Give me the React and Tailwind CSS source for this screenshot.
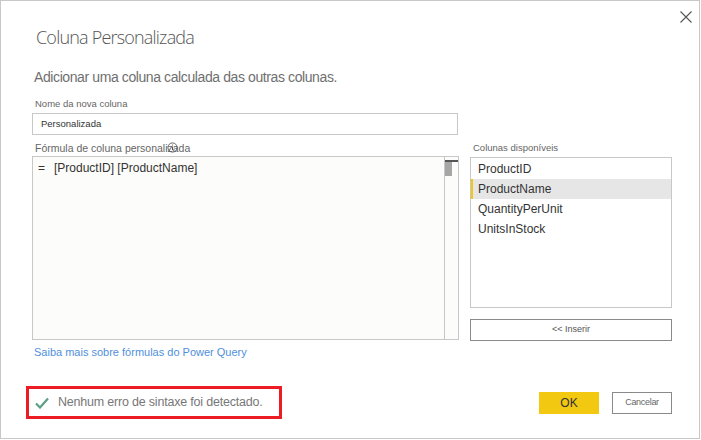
import React from 'react';

const columns = ['ProductID', 'ProductName', 'QuantityPerUnit', 'UnitsInStock'];

const App = () => {
  return (
    <div className="w-[701px] h-[440px] bg-white font-['Liberation_Sans',Arial,sans-serif]">
      <div className="relative w-[700px] h-[439px] border border-[#c8c8c8] pl-[31px]">
        {/* Close */}
        <button className="absolute right-[6px] top-[9px] w-[14px] h-[14px]">
          <svg width="14" height="14" viewBox="0 0 14 14">
            <path d="M1.5 1.5 L12.5 12.5 M12.5 1.5 L1.5 12.5" stroke="#555" strokeWidth="1.1" />
          </svg>
        </button>

        {/* Header */}
        <h1 className="pt-[25px] pl-[4px] text-[18px] leading-[22px] font-light tracking-[-0.8px] text-[#555] font-['Open_Sans',sans-serif]">
          Coluna Personalizada
        </h1>
        <p className="mt-[20px] pl-[2px] text-[14px] leading-[18px] text-[#6f6f6f] tracking-[-0.4px]">
          Adicionar uma coluna calculada das outras colunas.
        </p>

        {/* Nome da nova coluna */}
        <label className="block mt-[12px] pl-[3px] text-[9.5px] leading-[12px] text-[#666]">
          Nome da nova coluna
        </label>
        <div className="mt-[3px] w-[426px] h-[22px] border border-[#c8c8c8] pl-[8px] flex items-center text-[9.5px] text-[#333]">
          Personalizada
        </div>

        {/* Formula + available columns */}
        <div className="mt-[7px] flex gap-[11px]">
          <div className="w-[427px]">
            <div className="relative pl-[3px] h-[14px] text-[10.5px] leading-[12px] text-[#666]">
              Fórmula de coluna personalizada
              <svg className="absolute left-[135px] top-[0px]" width="11" height="11" viewBox="0 0 11 11">
                <circle cx="5.5" cy="5.5" r="4.6" fill="none" stroke="#555" strokeWidth="0.9" />
                <path d="M5.5 4.6 V8.2 M5.5 2.6 V3.5" stroke="#555" strokeWidth="1" />
              </svg>
            </div>
            <div className="flex h-[184px] border border-[#c8c8c8] bg-[#fcfcfa]">
              <div className="flex-1 pl-[5px] pt-[4px] text-[12px] leading-[14px] text-[#333]">
                <span className="mr-[9px]">=</span>[ProductID] [ProductName]
              </div>
              <div className="w-[14px] border-l border-[#c8c8c8] pt-[3px]">
                <div className="h-[2px] bg-[#555]" />
                <div className="w-[7px] h-[14px] bg-[#a6a6a6]" />
              </div>
            </div>
            <a className="block mt-[6px] pl-[2px] text-[11px] leading-[13px] text-[#4f8fdc]">
              Saiba mais sobre fórmulas do Power Query
            </a>
          </div>

          <div className="w-[202px]">
            <div className="pl-[3px] h-[15px] text-[9.5px] leading-[12px] text-[#666]">
              Colunas disponíveis
            </div>
            <ul className="h-[151px] border border-[#c8c8c8] pt-[1px]">
              {columns.map((c) => (
                <li
                  key={c}
                  className={
                    c === 'ProductName'
                      ? 'h-[20px] flex items-center pl-[5px] text-[12px] text-[#333] bg-[#e6e6e6] border-l-2 border-[#f2c811]'
                      : 'h-[20px] flex items-center pl-[7px] text-[12px] text-[#333]'
                  }
                >
                  {c}
                </li>
              ))}
            </ul>
            <button className="mt-[11px] w-[202px] h-[22px] border border-[#8a8a8a] text-[9px] text-[#555] flex items-center justify-center">
              &lt;&lt; Inserir
            </button>
          </div>
        </div>

        {/* Footer */}
        <div className="absolute left-[25px] right-[27px] top-[385px] flex items-center justify-between">
          <div className="w-[256px] h-[33px] border-[3px] border-[#ed1c24] flex items-center pl-[6px] whitespace-nowrap">
            <svg width="14" height="12" viewBox="0 0 14 12">
              <path d="M1 6.5 L5 10.5 L13 1.5" fill="none" stroke="#5e9e85" strokeWidth="2.2" />
            </svg>
            <span className="ml-[9px] text-[12.5px] tracking-[-0.2px] text-[#777]">Nenhum erro de sintaxe foi detectado.</span>
          </div>
          <div className="flex gap-[13px]">
            <button className="w-[60px] h-[22px] bg-[#f2c811] text-[12px] text-[#333]">OK</button>
            <button className="w-[60px] h-[22px] border border-[#8a8a8a] text-[9px] tracking-[-0.3px] text-[#666]">Cancelar</button>
          </div>
        </div>
      </div>
    </div>
  );
};

export default App;
